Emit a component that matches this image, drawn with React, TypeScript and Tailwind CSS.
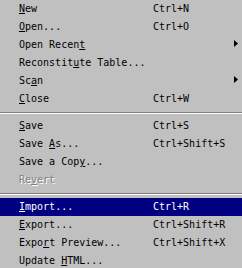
import React from 'react';

type Item = {
  label: string;
  key?: number; // index of underlined letter
  shortcut?: string;
  submenu?: boolean;
  disabled?: boolean;
  active?: boolean;
};

type Entry = Item | 'sep';

const entries: Entry[] = [
  { label: 'New', key: 0, shortcut: 'Ctrl+N' },
  { label: 'Open...', key: 0, shortcut: 'Ctrl+O' },
  { label: 'Open Recent', key: 10, submenu: true },
  { label: 'Reconstitute Table...', key: 9 },
  { label: 'Scan', key: 2, submenu: true },
  { label: 'Close', key: 0, shortcut: 'Ctrl+W' },
  'sep',
  { label: 'Save', key: 0, shortcut: 'Ctrl+S' },
  { label: 'Save As...', key: 5, shortcut: 'Ctrl+Shift+S' },
  { label: 'Save a Copy...', key: 10 },
  { label: 'Revert', key: 2, disabled: true },
  'sep',
  { label: 'Import...', key: 0, shortcut: 'Ctrl+R', active: true },
  { label: 'Export...', key: 0, shortcut: 'Ctrl+Shift+R' },
  { label: 'Export Preview...', key: 4, shortcut: 'Ctrl+Shift+X' },
  { label: 'Update HTML...', key: 7 },
];

const Label: React.FC<{ text: string; at?: number }> = ({ text, at }) => {
  if (at === undefined) return <>{text}</>;
  return (
    <>
      {text.slice(0, at)}
      <span className="underline underline-offset-[1px]">{text[at]}</span>
      {text.slice(at + 1)}
    </>
  );
};

const MenuRow: React.FC<{ item: Item }> = ({ item }) => {
  const color = item.active
    ? 'bg-[#000080] text-white'
    : item.disabled
      ? 'text-[#808080] [text-shadow:1px_1px_0_#ffffff]'
      : 'text-black';
  return (
    <div className={`flex h-[18px] items-center pl-[19px] pr-[4px] ${color}`}>
      <span className="w-[134px] shrink-0 whitespace-pre">
        <Label text={item.label} at={item.key} />
      </span>
      {item.shortcut && <span className="whitespace-pre">{item.shortcut}</span>}
      {item.submenu && (
        <svg width="4" height="7" viewBox="0 0 4 7" className="ml-auto -mt-[3px]">
          <polygon points="0,0 4,3.5 0,7" fill="#000000" />
        </svg>
      )}
    </div>
  );
};

export default function App() {
  return (
    <div
      className="h-[268px] w-[242px] overflow-hidden bg-[#c0c0c0] text-[10px] leading-[18px]"
      style={{ fontFamily: '"DejaVu Sans Mono", "Liberation Mono", monospace' }}
    >
      {entries.map((e, i) =>
        e === 'sep' ? (
          <div key={i} className="pt-[4px] pb-[3px]">
            <div className="h-px bg-[#808080]" />
            <div className="h-px bg-white" />
          </div>
        ) : (
          <MenuRow key={i} item={e} />
        ),
      )}
    </div>
  );
}
